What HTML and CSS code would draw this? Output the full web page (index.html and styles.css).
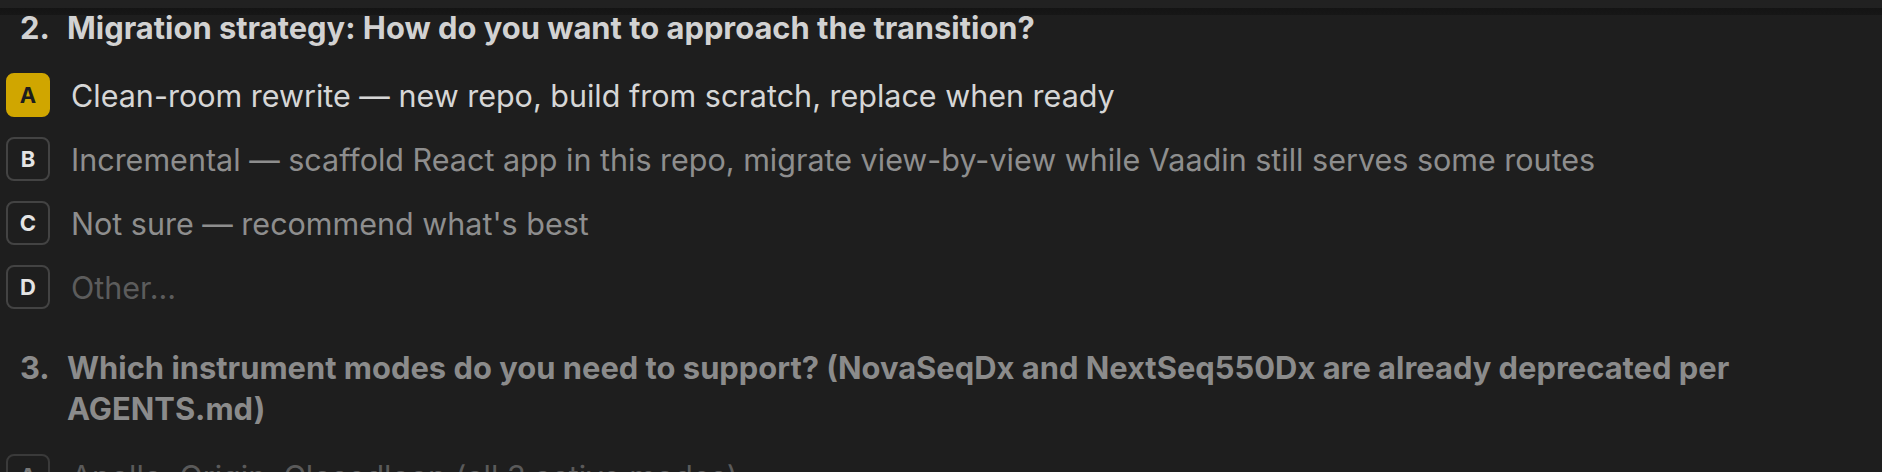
FILE: index.html
```html
<!DOCTYPE html>
<html>
<head>
<meta charset="utf-8">
<link rel="stylesheet" href="styles.css">
</head>
<body>
<div class="topfade"></div>
<main class="questions">
  <section class="question active">
    <h2 class="q-title"><span class="q-num">2.</span><span class="q-text">Migration strategy: How do you want to approach the transition?</span></h2>
    <ul class="options">
      <li class="option selected"><span class="key">A</span><span class="label">Clean-room rewrite — new repo, build from scratch, replace when ready</span></li>
      <li class="option"><span class="key">B</span><span class="label">Incremental — scaffold React app in this repo, migrate view-by-view while Vaadin still serves some routes</span></li>
      <li class="option"><span class="key">C</span><span class="label">Not sure — recommend what's best</span></li>
      <li class="option other"><span class="key">D</span><span class="label">Other...</span></li>
    </ul>
  </section>
  <section class="question inactive">
    <h2 class="q-title"><span class="q-num">3.</span><span class="q-text">Which instrument modes do you need to support? (NovaSeqDx and NextSeq550Dx are already deprecated per AGENTS.md)</span></h2>
    <ul class="options">
      <li class="option"><span class="key">A</span><span class="label">Apollo, Origin, Closedloop (all 3 active modes)</span></li>
    </ul>
  </section>
</main>
</body>
</html>
```
FILE: styles.css
```css
html, body {
  margin: 0;
  padding: 0;
  background: #1e1e1e;
  overflow: hidden;
}
body {
  font-family: Inter, "Noto Sans", sans-serif;
  height: 472px;
}
.topfade {
  position: absolute;
  top: 0;
  left: 0;
  right: 0;
  height: 15px;
  background: linear-gradient(to bottom, #212121 0, #212121 8px, #141414 8px, #171717 15px);
  z-index: 2;
}
.questions {
  padding: 7px 20px 0 6px;
  display: flex;
  flex-direction: column;
  gap: 38px;
}
.question {
  display: flex;
  flex-direction: column;
  gap: 25px;
}
.q-title {
  margin: 0;
  display: flex;
  padding-left: 14px;
  font-size: 30.9px;
  line-height: 41px;
  font-weight: 700;
  color: #d2d2d2;
}
.q-num {
  flex: 0 0 47px;
}
.q-text {
  flex: 1 1 auto;
}
.inactive .q-title {
  color: #8b8b8b;
}
.options {
  list-style: none;
  margin: 0;
  padding: 0;
  display: flex;
  flex-direction: column;
  gap: 20px;
}
.option {
  display: flex;
  align-items: center;
  gap: 21px;
  font-size: 30.5px;
  line-height: 41px;
  color: #8e8e8e;
}
.key {
  flex: 0 0 auto;
  width: 44px;
  height: 44px;
  box-sizing: border-box;
  border: 2px solid #434343;
  border-radius: 8px;
  display: flex;
  align-items: center;
  justify-content: center;
  font-size: 22px;
  font-weight: 700;
  line-height: 1;
  color: #e4e4e4;
}
.selected .key {
  background: #d0a600;
  border-color: #d0a600;
  color: #1d1d1d;
}
.selected .label {
  color: #d6d6d6;
}
.other .label {
  color: #5c5c5c;
}
.inactive .key {
  border-color: #3a3a3a;
  color: #777;
}
.inactive .label {
  color: #5a5a5a;
}
```
